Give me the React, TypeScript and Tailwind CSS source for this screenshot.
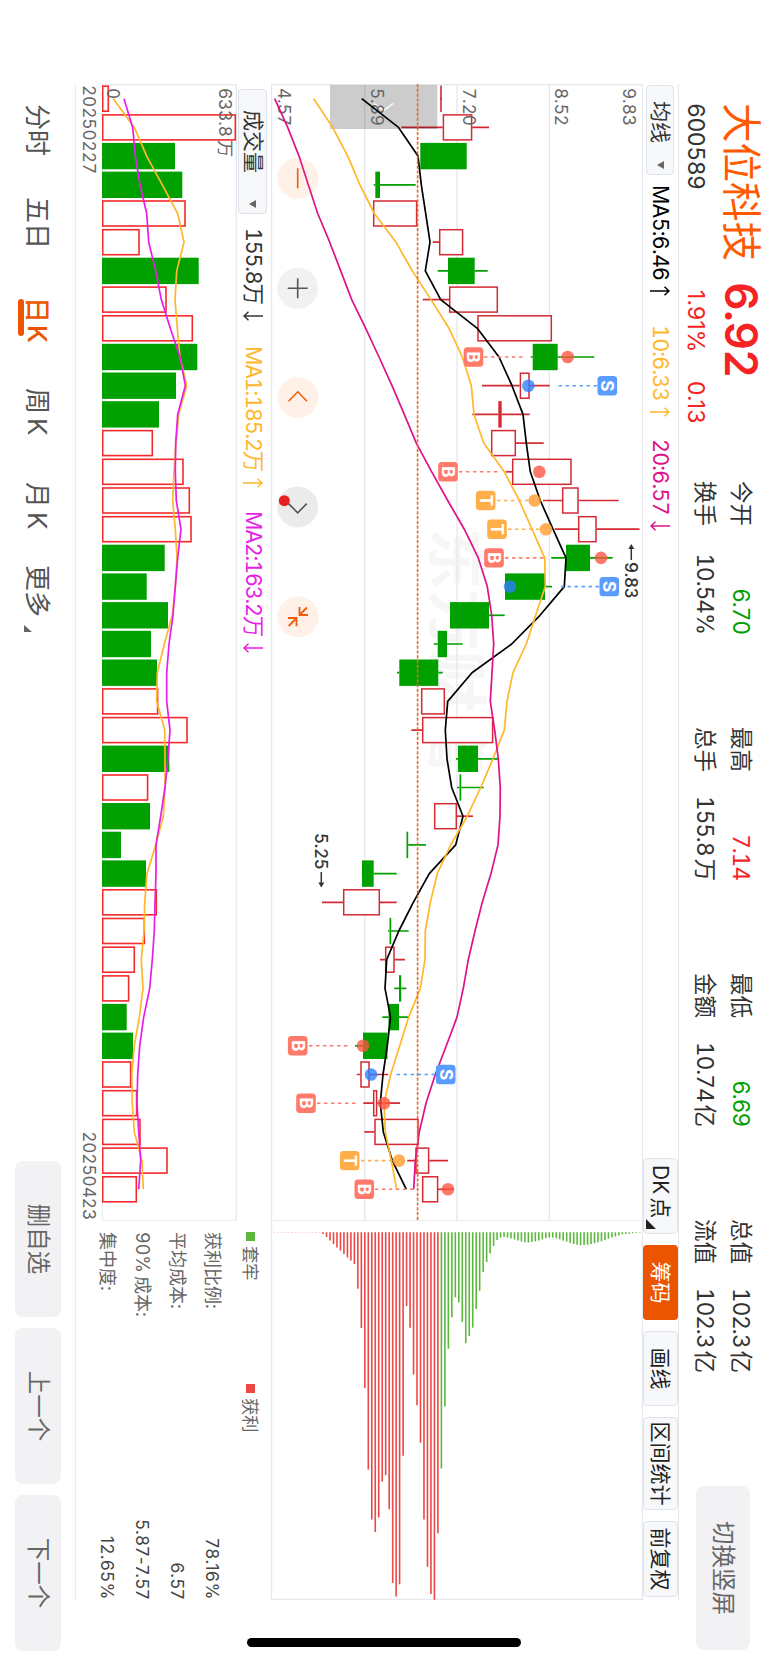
import React from 'react';

const RED = '#d42a33';
const GREEN = '#00a000';
const ORANGE = '#ffb72b';
const STEP = 28.7;
const FIRST = 98.7;

// levels are counted upwards from the bottom edge of the screen
const cx = (i: number) => FIRST + i * STEP;
const cy = (level: number) => 768 - level;
const line = (levels: number[]) => levels.map((v, i) => `${cx(i).toFixed(1)},${cy(v).toFixed(1)}`).join(' ');

type Candle = [up: number, low: number, bottom: number, top: number, high: number];

const candles: Candle[] = [
    [1, 441, 440.2, 441.8, 441], [1, 401.3, 442.7, 472.3, 489], [0, 420.3, 420.3, 466.7, 467], [0, 373.7, 375.3, 380, 415.7],
    [1, 373, 373, 417.3, 417.3], [1, 432.7, 439, 463.3, 463.3], [0, 437.7, 448, 474.7, 487.7], [1, 422.7, 449, 498, 498],
    [1, 477.3, 477.3, 552, 552], [0, 530.7, 532.7, 557.7, 594.3], [1, 482, 519.7, 529.7, 549.7], [1, 472.3, 498.3, 501.7, 529.7],
    [1, 491, 491, 516, 543.7], [1, 505.7, 512, 571.7, 571.7], [1, 543, 562, 578.7, 618.7], [1, 554.7, 578, 596.7, 639.5],
    [0, 551.3, 566, 590, 612.7], [0, 505, 505, 545, 552], [0, 450, 450, 489, 504.7], [0, 433.7, 437.7, 447, 462.7],
    [0, 397, 399.3, 438.3, 442.7], [1, 421, 421, 445, 445], [1, 411.3, 422, 493.3, 493.3], [0, 456, 458, 478, 498],
    [0, 457, 459.5, 461.2, 483.7], [1, 434, 434, 457, 473], [0, 406.5, 406.5, 408.2, 426], [0, 361.7, 362, 373.7, 396.7],
    [1, 322, 343, 380, 396.7], [0, 388, 389.5, 391.2, 408.7], [1, 380, 385, 394.7, 405], [0, 394.3, 399, 401.2, 406.3],
    [0, 382.3, 388.5, 399, 409], [0, 355, 363, 387.5, 387.5], [1, 356.7, 360.3, 369.7, 388.3], [1, 363.3, 373, 377.3, 400],
    [1, 364.3, 374.3, 418.7, 418.7], [1, 407.3, 415.3, 429.3, 448], [1, 422, 422, 438.3, 453.7],
];

const ma5 = [361.7, 398.5, 418, 421.3, 425.7, 430, 425.3, 440.7, 477.3, 499, 512, 523, 526.3, 530.3, 540.3, 553, 566, 564.3, 540, 511.7, 472, 447.7, 445.3, 447, 451.7, 463, 455.7, 429.3, 413.3, 398.8, 386.7, 385, 390.5, 387.3, 383, 380.3, 383.3, 392.3, 406.3];
const ma10 = [313.7, 332.7, 347.7, 360, 374.3, 396, 412.3, 431, 449, 462.3, 471.3, 474, 483.7, 504.3, 519.3, 532, 544.7, 545.3, 535.7, 526.3, 513, 507, 504.3, 493, 480.7, 467.3, 450.7, 437.3, 430.3, 425.3, 425, 420.3, 408.7, 399.7, 390.7, 384, 385.3, 391.3, 396.7];
const ma20 = [274.7, 287.7, 299, 308.3, 317.7, 329.7, 340.7, 351.7, 365.7, 379, 392, 404.3, 416.3, 431.7, 447.7, 464.3, 478.3, 487.3, 491.7, 493.7, 492, 490.3, 494.7, 498.3, 500.3, 500, 498, 491, 482.3, 475, 468.3, 463.3, 457, 446.3, 435.3, 426, 419.3, 415.3, 413.7];

const volumes = [109, 236, 175, 182.3, 185.7, 139.7, 198.7, 166.7, 193, 197.3, 176, 159, 153, 183.7, 190, 191.7, 164.7, 146.7, 168, 151, 157, 158.3, 187.7, 169.3, 148.3, 150, 121, 146, 157, 145, 135, 129.3, 126.7, 133, 131.3, 137.3, 140.7, 167.7, 137];
const volDown = [2, 3, 6, 9, 10, 11, 16, 17, 18, 19, 20, 23, 25, 26, 27, 32, 33];
const volMa1 = [113.3, 134.3, 146.7, 162.3, 177.7, 184, 176.7, 175, 177.3, 180, 186.7, 178.7, 176, 174, 172.7, 175.3, 177, 175.3, 172.3, 164.3, 157.3, 156.7, 164.7, 165, 165, 163.3, 155.7, 147, 144.7, 144, 141.3, 143, 139.3, 134.3, 131.7, 132.3, 134.3, 142, 143.3];
const volMa2 = [124, 132.7, 135.3, 140, 146.7, 148.7, 155.7, 161.3, 170.3, 180, 185.3, 177.7, 175.7, 175.3, 176.3, 181, 177.7, 175.3, 173, 169, 166.7, 166.7, 170, 168, 165, 160.7, 156, 156, 155, 154.3, 152.3, 149.7, 143.7, 139.7, 137.7, 137, 138.7, 140.7, 138.7];

const trapped = [236.2, 174.2, 116.4, 85, 65, 70.2, 89.5, 110.9, 103.6, 95.4, 76.8, 58.5, 39.6, 29.6, 21.3, 13.8, 7.6, 5.5, 4.8, 5.2, 6.2, 7.2, 8.3, 9.3, 10, 10.3, 9.6, 9, 8.3, 7.2, 5.9, 5.2, 5.2, 5.9, 6.9, 8.3, 9.3, 10.7, 11.7, 12.4, 13, 12.7, 12.4, 11.7, 11, 10, 9, 7.6, 6.5, 5.2, 4.1, 3.1, 2, 1.7, 1.4, 1, 0.7, 0.5];
const profit = [301, 367.4, 361.6, 334.4, 287.2, 210.4, 172.9, 142.2, 95.4, 73.7, 223.5, 351.9, 364.3, 350.6, 276.9, 242.8, 249.3, 285.1, 299.6, 287.2, 237.3, 155.6, 95.7, 56.5, 31.7, 28.2, 25.1, 21.7, 18.3, 15.2, 11.7, 8.3, 4.8, 1.7, 0.08, 0.08, 0.08, 0.08, 0.08, 0.08, 0.08, 0.08, 0.08, 0.08, 0.08, 0.08, 0.08, 0.08];

const markColors: Record<string, string> = {B: '#ff7a6b', S: '#5a9dff', T: '#ffae4a'};
const dotColors: Record<string, string> = {B: '#ff5340', S: '#2a7fff', T: '#ff9a26'};

// index, letter, dot level, label level, dash start, dash end
const marks: [number, string, number, number, number, number][] = [
    [9, 'B', 567.7, 473.5, 484, 523], [10, 'S', 528.3, 607.3, 597, 558], [13, 'B', 539.3, 448, 459, 498],
    [14, 'T', 534.7, 485.7, 497, 530], [15, 'T', 546, 497, 508, 541], [16, 'B', 601, 494, 505, 544],
    [17, 'S', 510, 609.3, 599, 561], [33, 'B', 363, 297.7, 309, 348], [34, 'S', 371, 445.7, 435, 396],
    [35, 'B', 384, 306, 317, 356], [37, 'T', 399, 349.7, 361, 394], [38, 'B', 448, 364.3, 375, 414],
];

const stats = [
    [['今开', '6.70', '', 'text-[#00a000]'], ['换手', '10.54%', '', 'text-[#333]']],
    [['最高', '7.14', '', 'text-[#f52323]'], ['总手', '155.8', '万', 'text-[#333]']],
    [['最低', '6.69', '', 'text-[#00a000]'], ['金额', '10.74', '亿', 'text-[#333]']],
    [['总值', '102.3', '亿', 'text-[#333]'], ['流值', '102.3', '亿', 'text-[#333]']],
];

const Arrow = ({up = false}: { up?: boolean }) => (
    <svg className={up ? 'rotate-180' : ''} width="10" height="20" viewBox="0 0 10 20" fill="none" stroke="currentColor" strokeWidth="1.5">
        <path d="M5 0V19M0.8 14.5L5 19L9.2 14.5"/>
    </svg>
);

const Caret = () => (
    <svg width="8" height="7" viewBox="0 0 8 7" fill="#666"><path d="M0 0H8L4 7Z"/></svg>
);

function Header() {
    return (
        <div className="flex h-[89px] pl-[103px]">
            <div className="w-[378px]">
                <div className="flex h-[55px] items-center">
                    <span className="w-[179px] text-[39.5px] text-[#ff5a00] leading-none whitespace-nowrap">大位科技</span>
                    <span className="text-[44.5px] font-semibold tracking-[-0.8px] text-[#f52323] leading-none">6.92</span>
                </div>
                <div className="flex h-[34px] items-center text-[23px] leading-none">
                    <span className="w-[187px] text-[#333] tracking-[-0.5px]">600589</span>
                    <span className="w-[91px] text-[#f52323] proportional-nums tracking-[0.1px]">1.91%</span>
                    <span className="text-[#f52323] proportional-nums tracking-[0.1px]">0.13</span>
                </div>
            </div>
            <div className="flex gap-[93px] pt-[9px]">
                {stats.map((rows, i) => (
                    <div key={i} className="w-[153px]">
                        {rows.map(([label, value, unit, color]) => (
                            <div key={label} className="flex h-9 items-center justify-between text-[22.5px] leading-none whitespace-nowrap">
                                <span className="text-[#333]">{label}</span>
                                <span className={`${color} flex gap-[3px] tracking-[-1px]`}>{value}{unit && <span>{unit}</span>}</span>
                            </div>
                        ))}
                    </div>
                ))}
            </div>
            <button className="ml-[114px] mt-[18px] h-[54px] w-[164px] rounded-lg bg-[#f2f2f4] text-[23.5px] text-[#666]">切换竖屏</button>
        </div>
    );
}

function Toolbar() {
    const box = 'h-[35px] rounded-[4px] border border-[#e0e3ea] bg-[#f7f8fa] text-[21px] leading-none text-[#222] whitespace-nowrap';
    return (
        <div className="ml-[84px] flex h-[36px] w-[1516px] items-center border-t border-[#e4e6eb]">
            <button className="ml-px flex h-7 w-[90px] items-center justify-between rounded-[4px] border border-[#dfe2e8] bg-[#f7f8fa] pl-[15px] pr-[5px] text-[21px] text-[#333]">均线<Caret/></button>
            <div className="ml-[10px] flex text-[21.5px] leading-none tracking-[-0.8px]">
                <span className="flex w-[140px] items-center gap-[6px] text-black">MA5:6.46<Arrow up/></span>
                <span className="flex w-[114px] items-center gap-[6px] text-[#ffb72b]">10:6.33<Arrow up/></span>
                <span className="flex items-center gap-[6px] text-[#e0128a]">20:6.57<Arrow/></span>
            </div>
            <div className="ml-auto mr-[3px] flex gap-[11px]">
                <button className={`${box} flex w-[76px] items-center pl-[6px]`}>
                    <span className="mr-[3px]">DK</span>点
                    <svg className="ml-auto mr-[4px] mt-[18px] shrink-0" width="10" height="10" viewBox="0 0 10 10" fill="#222"><path d="M10 0V10H0Z"/></svg>
                </button>
                <button className="h-[35px] w-[75px] rounded-[4px] bg-[#eb5500] text-[21px] leading-none text-white">筹码</button>
                <button className={`${box} w-[75px]`}>画线</button>
                <button className={`${box} w-[93px]`}>区间统计</button>
                <button className={`${box} w-[76px]`}>前复权</button>
            </div>
        </div>
    );
}

function PriceChart() {
    return (
        <svg width="1137" height="372" viewBox="84 125 1137 372" className="block shrink-0">
            <text x="528" y="334" fontSize="61.5" fontWeight="700" fill="#f6f6f6">东方财富</text>
            <g stroke="#e6e8ef" strokeWidth="1.4" fill="none">
                <path d="M84 218.7H1221M84 311H1221M84 403.3H1221"/>
                <path d="M84.5 125V497M84 125.5H1221M84 496.5H1221M1221 125V497"/>
            </g>

            {candles.map(([up, low, bottom, top, high], i) => {
                const color = up ? RED : GREEN;
                const solid = !up || top - bottom < 4;
                return (
                    <g key={i} stroke={color}>
                        <path d={`M${cx(i)} ${cy(high)}V${cy(top)}M${cx(i)} ${cy(bottom)}V${cy(low)}`} strokeWidth="1.7"/>
                        {solid
                            ? <rect x={cx(i) - 13.2} y={cy(top)} width="26.4" height={top - bottom} fill={color} stroke="none"/>
                            : <rect x={cx(i) - 12.5} y={cy(top) + 0.7} width="25" height={top - bottom - 1.4} fill="#fff" strokeWidth="1.5"/>}
                    </g>
                );
            })}

            <path d="M85 330.7H129V438H85Z" fill="#000" fillOpacity="0.2"/>
            <path d="M103.5 375L110.7 384.5L103.5 394" fill="none" stroke="#fff" strokeWidth="1.5"/>

            <g fontSize="17.3" fill="#666" letterSpacing="-0.1">
                <text x="88" y="144.7">9.83</text>
                <text x="88" y="212.7">8.52</text>
                <text x="88" y="305">7.20</text>
                <text x="88" y="397.4">5.89</text>
                <text x="88" y="490">4.57</text>
            </g>

            <g fill="none" strokeWidth="1.7" strokeLinejoin="round">
                <polyline points={line(ma5)} stroke="#000"/>
                <polyline points={line(ma10)} stroke={ORANGE}/>
                <polyline points={line(ma20)} stroke="#e0128a"/>
            </g>
            <path d="M84 350.4H1221" stroke="#e8692c" strokeWidth="1.6" strokeDasharray="3.2 1.6"/>

            {marks.map(([i, letter, dot, label, from, to]) => (
                <g key={i}>
                    <path d={`M${cx(i)} ${cy(from)}V${cy(to)}`} stroke={markColors[letter]} strokeWidth="1.6" strokeDasharray="3.4 3.6"/>
                    <circle cx={cx(i)} cy={cy(dot)} r="6.3" fill={dotColors[letter]} fillOpacity="0.78"/>
                    <rect x={cx(i) - 9.7} y={cy(label) - 9.8} width="19.4" height="19.6" rx="3.5" fill={markColors[letter]}/>
                    <text x={cx(i)} y={cy(label) + 6.2} fontSize="17" fontWeight="700" fill="#fff" textAnchor="middle">{letter}</text>
                </g>
            ))}

            <g fontSize="17" fontWeight="500" fill="#333" letterSpacing="-0.3">
                <text x="562" y="142.8">9.83</text>
                <text x="833" y="453.5">5.25</text>
            </g>
            <g stroke="#333" fill="#333" strokeWidth="1.5">
                <path d="M560 136.7H547"/>
                <path d="M544 136.7L549 133.7V139.7Z" stroke="none"/>
                <path d="M872 446.7H884"/>
                <path d="M887.5 446.7L882.5 443.7V449.7Z" stroke="none"/>
            </g>

            <g fill="none" strokeWidth="1.6">
                <circle cx="178.3" cy="470.3" r="20.5" fill="#ff6a20" fillOpacity="0.1"/>
                <path d="M168.3 470.3H188.3" stroke="#f25a0c"/>
                <circle cx="288.3" cy="470.3" r="20.5" fill="#000" fillOpacity="0.055"/>
                <path d="M278.3 470.3H298.3M288.3 460.3V480.3" stroke="#555"/>
                <circle cx="397.5" cy="470" r="20.5" fill="#ff6a20" fillOpacity="0.1"/>
                <path d="M401.3 461L391.8 470.2L401.3 479.5" stroke="#f25a0c"/>
                <circle cx="507" cy="470.3" r="20.5" fill="#000" fillOpacity="0.08"/>
                <path d="M503.6 461.2L512.8 470.3L503.6 479.5" stroke="#555"/>
                <circle cx="500.7" cy="483.7" r="5.5" fill="#e62020"/>
                <circle cx="616.7" cy="470" r="20.5" fill="#ff6a20" fillOpacity="0.1"/>
                <path stroke="#f25a0c" strokeWidth="1.8" d="M607 468.5H615V460M615 468.5L607.5 461M618 480V471.5H626.3M618 471.5L626 479.3"/>
            </g>
        </svg>
    );
}

function ChipChart() {
    return (
        <svg width="379" height="372" viewBox="1221 125 379 372" className="block shrink-0">
            <path d="M1221 125.5H1599.5V496.5H1221" fill="none" stroke="#e6e8ef" strokeWidth="1.4"/>
            <g strokeWidth="1.6">
                {trapped.map((len, i) => <path key={i} stroke="#5cb83c" d={`M1232.3 ${326.6 - i * 3.48}h${len}`}/>)}
                {profit.map((len, i) => <path key={i} stroke="#ec4646" d={`M1232.3 ${330.1 + i * 3.48}h${len}`}/>)}
            </g>
        </svg>
    );
}

function VolumeChart() {
    return (
        <svg width="1137" height="135" viewBox="84 531 1137 135" className="block">
            <path d="M84.5 666V531.7H1221V666" fill="none" stroke="#e6e8ef" strokeWidth="1.4"/>
            <path d="M84 665.6H1221" stroke="#e6e8ef"/>
            {volumes.map((v, i) => volDown.includes(i)
                ? <rect key={i} x={cx(i) - 13.2} y={cy(v)} width="26.4" height={v - 102} fill={GREEN}/>
                : <rect key={i} x={cx(i) - 12.5} y={cy(v) + 0.7} width="25" height={v - 103.4} fill="#fff" stroke="#f52a2a" strokeWidth="1.6"/>)}
            <g fontSize="17.3" fill="#666" letterSpacing="-0.1">
                <text x="88" y="549.5">633.8<tspan dx="3">万</tspan></text>
                <text x="88" y="661">0</text>
            </g>
            <g fill="none" strokeWidth="1.7" strokeLinejoin="round">
                <polyline points={line(volMa1)} stroke={ORANGE}/>
                <polyline points={line(volMa2)} stroke="#e81ee8"/>
            </g>
        </svg>
    );
}

function ChipInfo() {
    const rows = [['', '获利比例:', '78.16%'], ['', '平均成本:', '6.57'], ['90%', '成本:', '5.87-7.57'], ['', '集中度:', '12.65%']];
    return (
        <div className="w-[379px] pl-[11px] text-[17.3px] leading-none text-[#666]">
            <div className="flex h-[41px] items-center">
                <span className="flex w-[152px] items-center gap-[5px]"><i className="size-[9px] bg-[#5cb83c]"/>套牢</span>
                <span className="flex items-center gap-[5px]"><i className="size-[9px] bg-[#ec4646]"/>获利</span>
            </div>
            {rows.map(([prefix, label, value]) => (
                <div key={label} className="flex h-[35px] items-center justify-between">
                    <span className="flex gap-[3px] text-[18px]">{prefix && <span>{prefix}</span>}{label}</span>
                    <span className="text-[#444] proportional-nums tracking-[0.6px]">{value}</span>
                </div>
            ))}
        </div>
    );
}

function Footer() {
    return (
        <div className="flex h-[76px] text-[26px] leading-none text-[#555] whitespace-nowrap">
            <div className="ml-[84px] flex h-full w-[1077px] items-center border-t border-[#e8eaef] pl-[20px]">
                <span className="w-[93px]">分时</span>
                <span className="w-[100px]">五日</span>
                <span className="relative flex w-[91px] gap-[2px] text-[#eb5500] font-medium">日<span>K</span>
                    <i className="absolute left-[2px] top-[26px] h-[6px] w-[37px] rounded-full bg-[#eb5500]"/>
                </span>
                <span className="flex w-[94px] gap-[4px]">周<span>K</span></span>
                <span className="flex w-[83px] gap-[4px]">月<span>K</span></span>
                <span>更多</span>
                <svg className="ml-[8px] mt-[18px]" width="7" height="8" viewBox="0 0 7 8" fill="#666"><path d="M7 0V8H0Z"/></svg>
            </div>
            <div className="flex w-[439px] gap-[11px] border-t border-[#e8eaef] pt-[14px] text-[23.5px] text-[#666]">
                <button className="h-[46px] w-[156px] shrink-0 rounded-lg bg-[#f2f2f4]">删自选</button>
                <button className="h-[46px] w-[156px] shrink-0 rounded-lg bg-[#f2f2f4]">上一个</button>
                <button className="h-[46px] w-[156px] shrink-0 rounded-lg bg-[#f2f2f4]">下一个</button>
            </div>
        </div>
    );
}

export default function App() {
    return (
        <div className="relative h-[1662px] w-[768px] overflow-hidden bg-white">
            <div className="relative flex h-[768px] w-[1662px] origin-top-left translate-x-[768px] rotate-90 flex-col bg-white font-['Inter','Noto_Sans_CJK_SC',sans-serif] tabular-nums">
                <Header/>
                <Toolbar/>
                <div className="ml-[84px] flex h-[372px]">
                    <PriceChart/>
                    <ChipChart/>
                </div>
                <div className="ml-[84px] flex h-[195px]">
                    <div className="w-[1137px]">
                        <div className="flex h-[34px] items-center pt-[2px] pl-[5px]">
                            <button className="flex h-[29px] w-[125px] items-center justify-between rounded-[4px] border border-[#dfe2e8] bg-[#f7f8fa] pl-[20px] pr-[5px] text-[21px] text-[#333]">成交量<Caret/></button>
                            <div className="ml-[14px] flex text-[21.5px] leading-none tracking-[-1.2px] whitespace-nowrap">
                                <span className="flex w-[118px] items-center gap-[7px] text-[#333]">155.8万<Arrow/></span>
                                <span className="flex w-[165px] items-center gap-[7px] text-[#ffb72b]">MA1:185.2万<Arrow up/></span>
                                <span className="flex items-center gap-[7px] text-[#e81ee8]">MA2:163.2万<Arrow/></span>
                            </div>
                        </div>
                        <VolumeChart/>
                        <div className="flex h-[26px] items-center justify-between pl-[1px] pr-px text-[17.3px] leading-none tracking-[-0.1px] text-[#666]">
                            <span>20250227</span>
                            <span>20250423</span>
                        </div>
                    </div>
                    <ChipInfo/>
                </div>
                <Footer/>
                <div className="absolute left-[1638px] top-[247px] h-[274px] w-[9px] rounded-full bg-black"/>
            </div>
        </div>
    );
}
